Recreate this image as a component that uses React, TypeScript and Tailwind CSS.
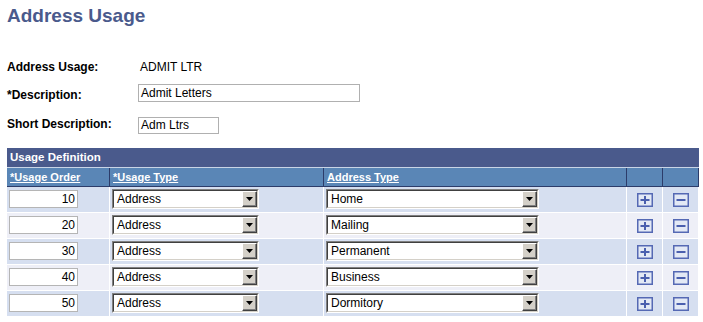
import React from "react";

const rows = [
  { order: "10", addr: "Home", odd: true },
  { order: "20", addr: "Mailing", odd: false },
  { order: "30", addr: "Permanent", odd: true },
  { order: "40", addr: "Business", odd: false },
  { order: "50", addr: "Dormitory", odd: true },
];

function Arrow() {
  return (
    <svg width="7" height="4" viewBox="0 0 7 4">
      <polygon points="0,0 7,0 3.5,4" fill="#000" />
    </svg>
  );
}

function Select({ value, wide }: { value: string; wide: boolean }) {
  return (
    <div
      className={
        (wide ? "w-[213px]" : "w-[147px]") +
        " h-[20px] flex border border-t-[#808080] border-l-[#808080] border-b-white border-r-white"
      }
    >
      <div className="flex-1 flex border border-t-[#404040] border-l-[#404040] border-b-[#d4d0c8] border-r-[#d4d0c8] bg-white">
        <div className="flex-1 pl-[3px] text-[12px] leading-[16px] whitespace-nowrap overflow-hidden">
          {value}
        </div>
        <div className="w-[15px] h-full flex border border-t-white border-l-white border-b-[#404040] border-r-[#404040] bg-[#d4d0c8]">
          <div className="flex-1 flex items-center justify-center border-b border-r border-b-[#808080] border-r-[#808080]">
            <Arrow />
          </div>
        </div>
      </div>
    </div>
  );
}

function PlusBtn() {
  return (
    <svg width="16" height="14" viewBox="0 0 16 14">
      <rect x="0.75" y="0.75" width="14.5" height="12.5" fill="#e3e9f5" stroke="#5569b4" strokeWidth="1.5" />
      <path d="M8 3v8M3.5 7h9" stroke="#4a5fae" strokeWidth="2" />
    </svg>
  );
}

function MinusBtn() {
  return (
    <svg width="16" height="14" viewBox="0 0 16 14">
      <rect x="0.75" y="0.75" width="14.5" height="12.5" fill="#e3e9f5" stroke="#5569b4" strokeWidth="1.5" />
      <path d="M3.5 7h9" stroke="#4a5fae" strokeWidth="2" />
    </svg>
  );
}

export default function App() {
  return (
    <div className="w-[703px] h-[322px] bg-white text-black overflow-hidden font-['Liberation_Sans',Arial,sans-serif]">
      <div className="pl-[7px] pt-[5px] text-[19px] leading-[22px] font-bold text-[#4a5a8c]">
        Address Usage
      </div>

      <div className="mt-[33px] pl-[7px] flex h-[14px] text-[12px] leading-[14px]">
        <div className="w-[131px] font-bold">Address Usage:</div>
        <div className="pl-[2px]">ADMIT LTR</div>
      </div>

      <div className="mt-[10px] pl-[7px] flex items-start h-[18px] text-[12px]">
        <div className="w-[131px] pt-[4px] leading-[14px] font-bold">*Description:</div>
        <div className="w-[222px] h-[18px] border border-[#b0b0b0] bg-white px-[2px] leading-[16px]">
          Admit Letters
        </div>
      </div>

      <div className="mt-[15px] pl-[7px] flex items-start h-[17px] text-[12px]">
        <div className="w-[131px] pt-[0px] leading-[14px] font-bold">Short Description:</div>
        <div className="w-[81px] h-[17px] border border-[#b0b0b0] bg-white px-[2px] leading-[15px]">
          Adm Ltrs
        </div>
      </div>

      <div className="mt-[14px] ml-[7px] w-[692px]">
        <div className="h-[20px] bg-[#4a5a8c] border-b border-b-[#c9d5e6] pl-[3px] text-white font-bold text-[11.5px] leading-[19px]">
          Usage Definition
        </div>
        <div className="flex h-[19px] bg-[#5a86b6] border-b border-b-[#2c3c6a] text-white font-bold text-[11px] leading-[18px]">
          <div className="w-[103px] border-r border-r-[#2c3c6a] pl-[3px]">
            <span className="underline">*Usage Order</span>
          </div>
          <div className="w-[214px] border-r border-r-[#2c3c6a] pl-[3px]">
            <span className="underline">*Usage Type</span>
          </div>
          <div className="w-[303px] border-r border-r-[#2c3c6a] pl-[3px]">
            <span className="underline">Address Type</span>
          </div>
          <div className="w-[36px] border-r border-r-[#2c3c6a]" />
          <div className="w-[36px] border-r border-r-[#2c3c6a]" />
        </div>
        {rows.map((r) => (
          <div
            key={r.order}
            className={
              (r.odd ? "bg-[#d6dff0]" : "bg-[#eeeff7]") +
              " flex h-[26px] border-b border-b-white text-[12px]"
            }
          >
            <div className="w-[103px] border-r border-r-white pl-[2px] pt-[3px]">
              <div className="w-[69px] h-[18px] border border-[#b5b5b5] bg-white text-right pr-[2px] leading-[16px]">
                {r.order}
              </div>
            </div>
            <div className="w-[214px] border-r border-r-white pl-[2px] pt-[2px]">
              <Select value="Address" wide={false} />
            </div>
            <div className="w-[303px] border-r border-r-white pl-[2px] pt-[2px]">
              <Select value={r.addr} wide={true} />
            </div>
            <div className="w-[36px] border-r border-r-white flex items-center justify-center">
              <PlusBtn />
            </div>
            <div className="w-[36px] border-r border-r-white flex items-center justify-center">
              <MinusBtn />
            </div>
          </div>
        ))}
      </div>
    </div>
  );
}
